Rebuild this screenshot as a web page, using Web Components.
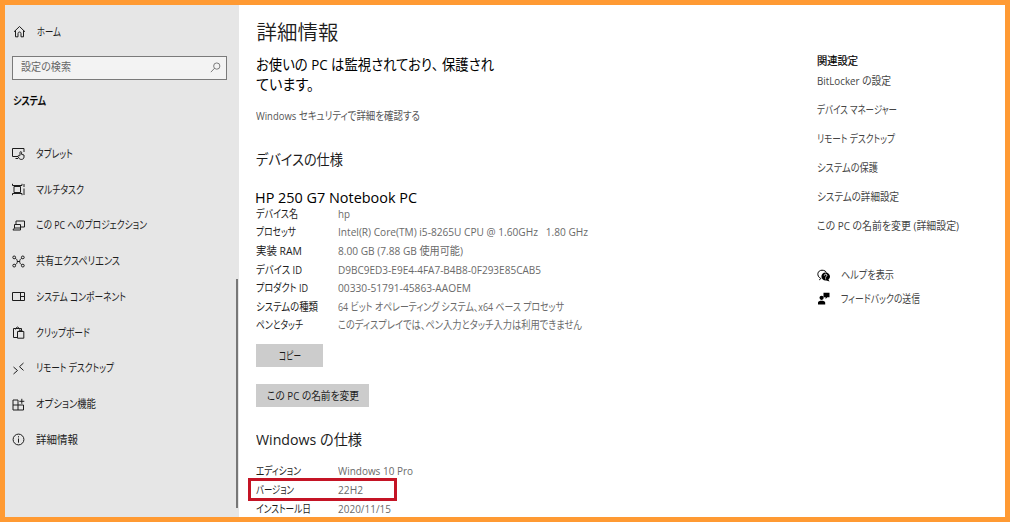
<!DOCTYPE html>
<html lang="ja">
<head>
<meta charset="utf-8">
<title>設定</title>
<style>
  body {
    margin: 0;
    font-family: "Open Sans", "Noto Sans CJK JP", sans-serif;
    font-size: 11px;
    line-height: 16px;
    color: #1c1c1c;
  }
</style>
</head>
<body>
<settings-window>
  <settings-sidebar slot="sidebar">
    <nav-item slot="home" icon="home" width="24">ホーム</nav-item>
    <nav-item icon="tablet" width="37">タブレット</nav-item>
    <nav-item icon="multitask" width="48">マルチタスク</nav-item>
    <nav-item icon="project" width="111">この PC へのプロジェクション</nav-item>
    <nav-item icon="share" width="84">共有エクスペリエンス</nav-item>
    <nav-item icon="component" width="90">システム コンポーネント</nav-item>
    <nav-item icon="clipboard" width="54">クリップボード</nav-item>
    <nav-item icon="remote" width="78">リモート デスクトップ</nav-item>
    <nav-item icon="optional" width="60">オプション機能</nav-item>
    <nav-item icon="info" width="42">詳細情報</nav-item>
  </settings-sidebar>
  <about-page slot="main"></about-page>
  <related-links slot="related"></related-links>
</settings-window>

<script>
const icons = {
  home: '<path d="M1 6.8 6.5 1.5 12 6.8M2.5 5.5V11.8H5V8.5C5 6.5 8 6.5 8 8.5V11.8H10.5V5.5"/>',
  search: '<circle cx="8" cy="4.8" r="3.7"/><path d="M5.4 7.4 1 12"/>',
  tablet: '<path d="M6 9.5H.5V1.5H12V5M3.5 11.5H6"/><path d="M8 8.5V5.4C8 4.4 9.6 4.4 9.6 5.4V7.4L12 8V10C12 13 7.8 13 7 11.2L5.8 9.2C6.2 8.2 7 8.2 8 9"/>',
  multitask: '<path d="M2 3.5H8.5V9.5H2ZM.5 .8V2.5H10V.8M.5 12.2V10.5H10V12.2M12 1V4M12 5.5V12"/>',
  project: '<path d="M4 5.5V2H12.5V8H8.5M2.5 5.5H8.5V9H2.5ZM2.5 9 .9 11H8.5V9"/>',
  share: '<path d="M3.3 3.3C6 4.5 6 8.5 3.3 9.7M9.7 3.3C7 4.5 7 8.5 9.7 9.7M5 6.5H8"/><circle cx="2.2" cy="2.4" r="1.4"/><circle cx="10.8" cy="2.4" r="1.4"/><circle cx="2.2" cy="10.6" r="1.4"/><circle cx="10.8" cy="10.6" r="1.4"/>',
  component: '<path d="M.5 2.5H12.5V10.5H.5ZM8.5 2.5V10.5M8.5 6.5H12.5"/>',
  clipboard: '<path d="M5.5 11.5H1.5V2.5H9.5V4.5M3.5 3.5V2.5L5.5 1 7.5 2.5V3.5M5.5 5.5H11.8V12.2H5.5ZM7.3 5.5V4.3H10V5.5"/>',
  remote: '<path d="M1.5 5 5.5 8.5 1.5 12M11.5 1 7.5 4.7 11.5 8.4"/>',
  optional: '<path d="M6 2H1V12H11.5V7H1M6 2V12M9.8 .8V5.8M7.3 3.3H12.3"/>',
  info: '<circle cx="6.5" cy="6.5" r="5.4"/><path d="M6.5 5.5V9.7M6.5 3.2V4.4"/>',
  help: '<path d="M2.2 10.8C3.5 10.3 3.8 9.8 3.8 9.5C-1 7 .5 1.2 5 1.2C7.5 1.2 9 2.5 9.4 3.5"/><path fill="#000" stroke="none" d="M8.5 3.6C11 3.6 13 5.3 13 7.6C13 9 12.2 10 11.4 10.6L12.6 12.5L9.4 11.5C6.5 11.8 4.4 10 4.4 7.6C4.4 5.3 6 3.6 8.5 3.6Z"/><path stroke="#fff" d="M7.3 6.5C7.3 4.7 10 4.8 9.9 6.4C9.9 7.3 8.6 7.3 8.6 8.6M8.6 9.4V10.3"/>',
  feedback: '<path fill="#000" stroke="none" d="M6.5 .8H12.5V5.2H10.3L8.6 7V5.2H6.5ZM1 12.5V10.5C1 8.3 8.2 8.3 8.2 10.5V12.5Z"/><circle cx="4.6" cy="5.8" r="2.1" fill="#000" stroke="none"/>'
};

function attach(element, html) {
  element.attachShadow({ mode: "open" }).innerHTML = html;
}

class LineIcon extends HTMLElement {
  connectedCallback() {
    attach(this, `
      <style>
        :host { display: block; flex: none; width: 13px; height: 13px; }
        svg { display: block; width: 100%; height: 100%; fill: none; stroke: currentColor; stroke-width: 1; }
      </style>
      <svg viewBox="0 0 13 13">${icons[this.getAttribute("name")]}</svg>
    `);
  }
}

// One line of text, condensed or stretched to the given width
class FitText extends HTMLElement {
  connectedCallback() {
    const width = Number(this.getAttribute("width"));
    attach(this, `
      <style>
        :host { display: block; flex: none; width: ${width}px; white-space: nowrap; }
        span { display: inline-block; vertical-align: top; white-space: pre; transform-origin: 0 50%; font-feature-settings: "palt"; }
      </style>
      <span><slot></slot></span>
    `);
    const span = this.shadowRoot.querySelector("span");
    span.style.transform = `scaleX(${width / span.getBoundingClientRect().width})`;
  }
}

class NavItem extends HTMLElement {
  connectedCallback() {
    attach(this, `
      <style>
        :host { display: flex; align-items: center; gap: 11px; height: 35.75px; padding-left: 7px; }
      </style>
      <line-icon name="${this.getAttribute("icon")}"></line-icon>
      <fit-text width="${this.getAttribute("width")}">${this.textContent}</fit-text>
    `);
  }
}

class SettingsSidebar extends HTMLElement {
  connectedCallback() {
    attach(this, `
      <style>
        :host { display: flex; justify-content: space-between; width: 234px; background: #e6e6e6; }
        .menu { padding-top: 9px; }
        ::slotted([slot="home"]) { padding-left: 8px; }
        .search {
          display: flex; align-items: center; justify-content: space-between;
          box-sizing: border-box; width: 215px; height: 24px; margin: 6px 0 0 7px;
          padding: 0 5px 2px 8px; border: 1.5px solid #7a7a7a; background: #f3f3f3; color: #666;
        }
        .search line-icon { width: 11px; height: 11px; margin-top: 2px; }
        .title { margin: 13px 0 0 7.5px; height: 16px; font-weight: 500; color: #000; -webkit-text-stroke: .2px; }
        nav { padding-top: 27.2px; }
        .thumb { align-self: flex-end; width: 2px; height: 229px; margin: 0 1px 9px 0; background: #777; }
      </style>
      <div class="menu">
        <slot name="home"></slot>
        <div class="search">
          <fit-text width="50">設定の検索</fit-text>
          <line-icon name="search"></line-icon>
        </div>
        <div class="title"><fit-text width="33">システム</fit-text></div>
        <nav><slot></slot></nav>
      </div>
      <div class="thumb"></div>
    `);
  }
}

class SpecRow extends HTMLElement {
  connectedCallback() {
    const [labelWidth, valueWidth] = this.getAttribute("widths").split(" ");
    attach(this, `
      <style>
        :host { display: flex; align-items: center; height: 18.6px; }
        .label { width: 82px; color: #1c1c1c; }
        .value { color: #6a6a6a; }
      </style>
      <div class="label"><fit-text width="${labelWidth}">${this.getAttribute("label")}</fit-text></div>
      <div class="value"><fit-text width="${valueWidth}">${this.textContent}</fit-text></div>
    `);
  }
}

class PushButton extends HTMLElement {
  connectedCallback() {
    attach(this, `
      <style>
        :host { display: flex; align-items: center; justify-content: center; height: 23px; background: #ccc; }
      </style>
      <fit-text width="${this.getAttribute("width")}">${this.textContent}</fit-text>
    `);
  }
}

class AboutPage extends HTMLElement {
  connectedCallback() {
    attach(this, `
      <style>
        :host { display: block; padding-left: 17.4px; }
        .heading { padding-top: 12px; height: 30px; line-height: 30px; font-size: 20.5px; font-weight: 350; }
        .status { margin-top: 7.5px; line-height: 20.5px; font-size: 14.5px; color: #000; }
        .comma { letter-spacing: .25em; }
        .security { margin-top: 12.5px; height: 16px; color: #555; }
        .section { height: 22px; line-height: 22px; font-size: 14.5px; }
        .device { margin-top: 25px; }
        .model { margin-top: 16px; margin-left: -1px; color: #000; }
        .specs { margin-top: -4.5px; }
        .copy { width: 67px; margin-top: 9.5px; }
        .rename { width: 112.5px; margin-top: 17px; }
        .windows { margin-top: 22px; }
        .edition { position: relative; margin-top: 11px; }
        .highlight {
          position: absolute; left: -8px; top: 15.6px; box-sizing: border-box;
          width: 149px; height: 23px; border: 3px solid #c41425;
        }
      </style>
      <div class="heading"><fit-text width="82">詳細情報</fit-text></div>
      <div class="status">
        <fit-text width="238">お使いの PC は監視されており<span class="comma">、</span>保護され</fit-text>
        <fit-text width="58">ています。</fit-text>
      </div>
      <div class="security"><fit-text width="164">Windows セキュリティで詳細を確認する</fit-text></div>
      <div class="section device"><fit-text width="87">デバイスの仕様</fit-text></div>
      <div class="section model"><fit-text width="162">HP 250 G7 Notebook PC</fit-text></div>
      <div class="specs">
        <spec-row label="デバイス名" widths="42 12">hp</spec-row>
        <spec-row label="プロセッサ" widths="40 250">Intel(R) Core(TM) i5-8265U CPU @ 1.60GHz   1.80 GHz</spec-row>
        <spec-row label="実装 RAM" widths="46 125">8.00 GB (7.88 GB 使用可能)</spec-row>
        <spec-row label="デバイス ID" widths="46 203">D9BC9ED3-E9E4-4FA7-B4B8-0F293E85CAB5</spec-row>
        <spec-row label="プロダクト ID" widths="52 133">00330-51791-45863-AAOEM</spec-row>
        <spec-row label="システムの種類" widths="62 226">64 ビット オペレーティング システム、x64 ベース プロセッサ</spec-row>
        <spec-row label="ペンとタッチ" widths="47 244">このディスプレイでは、ペン入力とタッチ入力は利用できません</spec-row>
      </div>
      <push-button class="copy" width="22">コピー</push-button>
      <push-button class="rename" width="92">この PC の名前を変更</push-button>
      <div class="section windows"><fit-text width="106">Windows の仕様</fit-text></div>
      <div class="edition">
        <spec-row label="エディション" widths="45 75">Windows 10 Pro</spec-row>
        <spec-row label="バージョン" widths="38 25">22H2</spec-row>
        <spec-row label="インストール日" widths="55 53">2020/11/15</spec-row>
        <div class="highlight"></div>
      </div>
    `);
  }
}

class RelatedLinks extends HTMLElement {
  connectedCallback() {
    attach(this, `
      <style>
        :host { display: block; padding-top: 47px; color: #444; }
        .title { height: 17px; line-height: 17px; color: #000; -webkit-text-stroke: .2px; }
        .links { margin-top: -3px; }
        .links fit-text { height: 29.1px; line-height: 29.1px; }
        .support { margin-top: 23px; }
        .support div { display: flex; align-items: center; gap: 11px; height: 23.5px; }
        line-icon { color: #000; }
      </style>
      <div class="title"><fit-text width="41">関連設定</fit-text></div>
      <div class="links">
        <fit-text width="74">BitLocker の設定</fit-text>
        <fit-text width="80">デバイス マネージャー</fit-text>
        <fit-text width="78">リモート デスクトップ</fit-text>
        <fit-text width="61">システムの保護</fit-text>
        <fit-text width="82">システムの詳細設定</fit-text>
        <fit-text width="142">この PC の名前を変更 (詳細設定)</fit-text>
      </div>
      <div class="support">
        <div><line-icon name="help"></line-icon><fit-text width="53">ヘルプを表示</fit-text></div>
        <div><line-icon name="feedback"></line-icon><fit-text width="79">フィードバックの送信</fit-text></div>
      </div>
    `);
  }
}

class SettingsWindow extends HTMLElement {
  connectedCallback() {
    attach(this, `
      <style>
        :host {
          display: flex; box-sizing: border-box; width: 1010px; height: 522px;
          overflow: hidden; border: 5px solid #ff9a33; background: #fff;
        }
        ::slotted(*) { flex: none; box-sizing: border-box; }
        ::slotted([slot="main"]) { width: 577.5px; }
      </style>
      <slot name="sidebar"></slot>
      <slot name="main"></slot>
      <slot name="related"></slot>
    `);
  }
}

customElements.define("settings-window", SettingsWindow);
customElements.define("settings-sidebar", SettingsSidebar);
customElements.define("about-page", AboutPage);
customElements.define("related-links", RelatedLinks);
customElements.define("line-icon", LineIcon);
customElements.define("fit-text", FitText);
customElements.define("nav-item", NavItem);
customElements.define("spec-row", SpecRow);
customElements.define("push-button", PushButton);
</script>
</body>
</html>
